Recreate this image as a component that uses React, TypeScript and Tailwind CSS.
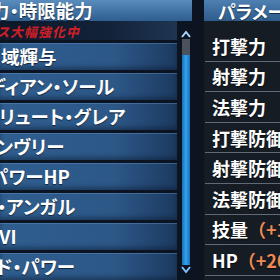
const leftRows = [
  { text: "域輝与", cls: "ml-[1px]" },
  { text: "ディアン・ソール", cls: "ml-[-12px]" },
  { text: "リュート・グレア", cls: "ml-[-1px]" },
  { text: "ンヴリー", cls: "ml-[-4px]" },
  { text: "パワーHP", cls: "ml-[-10px]" },
  { text: "・アンガル", cls: "ml-[-3px]" },
  { text: "VI", cls: "ml-[-1px]" },
  { text: "ド・パワー", cls: "ml-[-4px]" },
]

const params = [
  { label: "打撃力" },
  { label: "射撃力" },
  { label: "法撃力" },
  { label: "打撃防御" },
  { label: "射撃防御" },
  { label: "法撃防御" },
  { label: "技量", bonus: "（+10）" },
  { label: "HP", bonus: "（+20）" },
]

const jp = "font-['Noto_Sans_CJK_JP','Noto_Sans',sans-serif] font-bold [font-feature-settings:'palt']"

export default function App() {
  return (
    <div className={`flex h-[280px] w-[280px] overflow-hidden bg-[#0b1420] text-white ${jp}`}>
      {/* skill list */}
      <div className="flex w-[192px] shrink-0 flex-col">
        <div className="flex h-[21px] items-center overflow-hidden bg-[linear-gradient(180deg,#5b8cbe_0%,#4577a9_45%,#2f5e90_100%)]">
          <span className="ml-[-9px] whitespace-nowrap text-[18.5px] leading-none [text-shadow:0_1px_1px_rgba(0,0,0,0.6)]">
            力・時限能力
          </span>
        </div>
        <div className="flex flex-1">
          <div className="flex w-[177px] flex-col">
            <div className="flex h-[19px] items-center overflow-hidden bg-[linear-gradient(90deg,#0d1828_0%,#122238_60%,#1d3552_100%)] pt-[2px]">
              <span className="ml-[-3px] whitespace-nowrap text-[13px] font-black italic leading-none tracking-[1px] text-[#c81f28] blur-[0.6px]">
                ス大幅強化中
              </span>
            </div>
            {leftRows.map((r) => (
              <div
                key={r.text}
                className="mt-[3px] flex h-[27px] items-center overflow-hidden bg-[linear-gradient(90deg,#2f5e8f_0%,#2c5787_65%,#1c3a60_100%)] shadow-[inset_0_1px_0_rgba(120,170,220,0.35),inset_0_-3px_4px_rgba(10,25,45,0.45)]"
              >
                <span className={`${r.cls} whitespace-nowrap text-[18.5px] leading-none [text-shadow:0_1px_1px_rgba(0,0,0,0.6)]`}>
                  {r.text}
                </span>
              </div>
            ))}
          </div>
          {/* scrollbar */}
          <div className="ml-[4px] flex w-[10px] flex-col items-center pt-[9px] pb-[6px]">
            <svg width="10" height="8" viewBox="0 0 10 8">
              <path d="M1 7 L5 2 L9 7" fill="none" stroke="#a9d8ff" strokeWidth="2" />
            </svg>
            <div className="mt-[1px] h-[16px] w-[8px] bg-[#4b525b]" />
            <div className="w-[8px] flex-1 bg-[linear-gradient(90deg,#1670b8_0%,#35a2ec_50%,#1670b8_100%)]" />
            <svg width="10" height="8" viewBox="0 0 10 8" className="mt-[1px]">
              <path d="M1 1 L5 6 L9 1" fill="none" stroke="#7cc4ff" strokeWidth="2" />
            </svg>
          </div>
        </div>
      </div>

      {/* parameter panel */}
      <div className="ml-[12px] flex flex-1 flex-col bg-[#161c24]">
        <div className="flex h-[21px] items-center overflow-hidden bg-[linear-gradient(180deg,#4f80b2_0%,#3d6d9e_50%,#2e5b8a_100%)]">
          <span className="ml-[14px] whitespace-nowrap text-[18px] leading-none [text-shadow:0_1px_1px_rgba(0,0,0,0.6)]">
            パラメーター
          </span>
        </div>
        <div className="mt-[10px] flex flex-col">
          {params.map((p) => (
            <div
              key={p.label}
              className="ml-[1px] flex h-[30.6px] items-center overflow-hidden border-b border-[#606974] pl-[7px]"
            >
              <span className="whitespace-nowrap text-[18px] leading-none [text-shadow:0_1px_1px_rgba(0,0,0,0.6)]">
                {p.label}
                {p.bonus && (
                  <span className="text-[#f08a52] [font-feature-settings:normal]">{p.bonus}</span>
                )}
              </span>
            </div>
          ))}
        </div>
      </div>
    </div>
  )
}
